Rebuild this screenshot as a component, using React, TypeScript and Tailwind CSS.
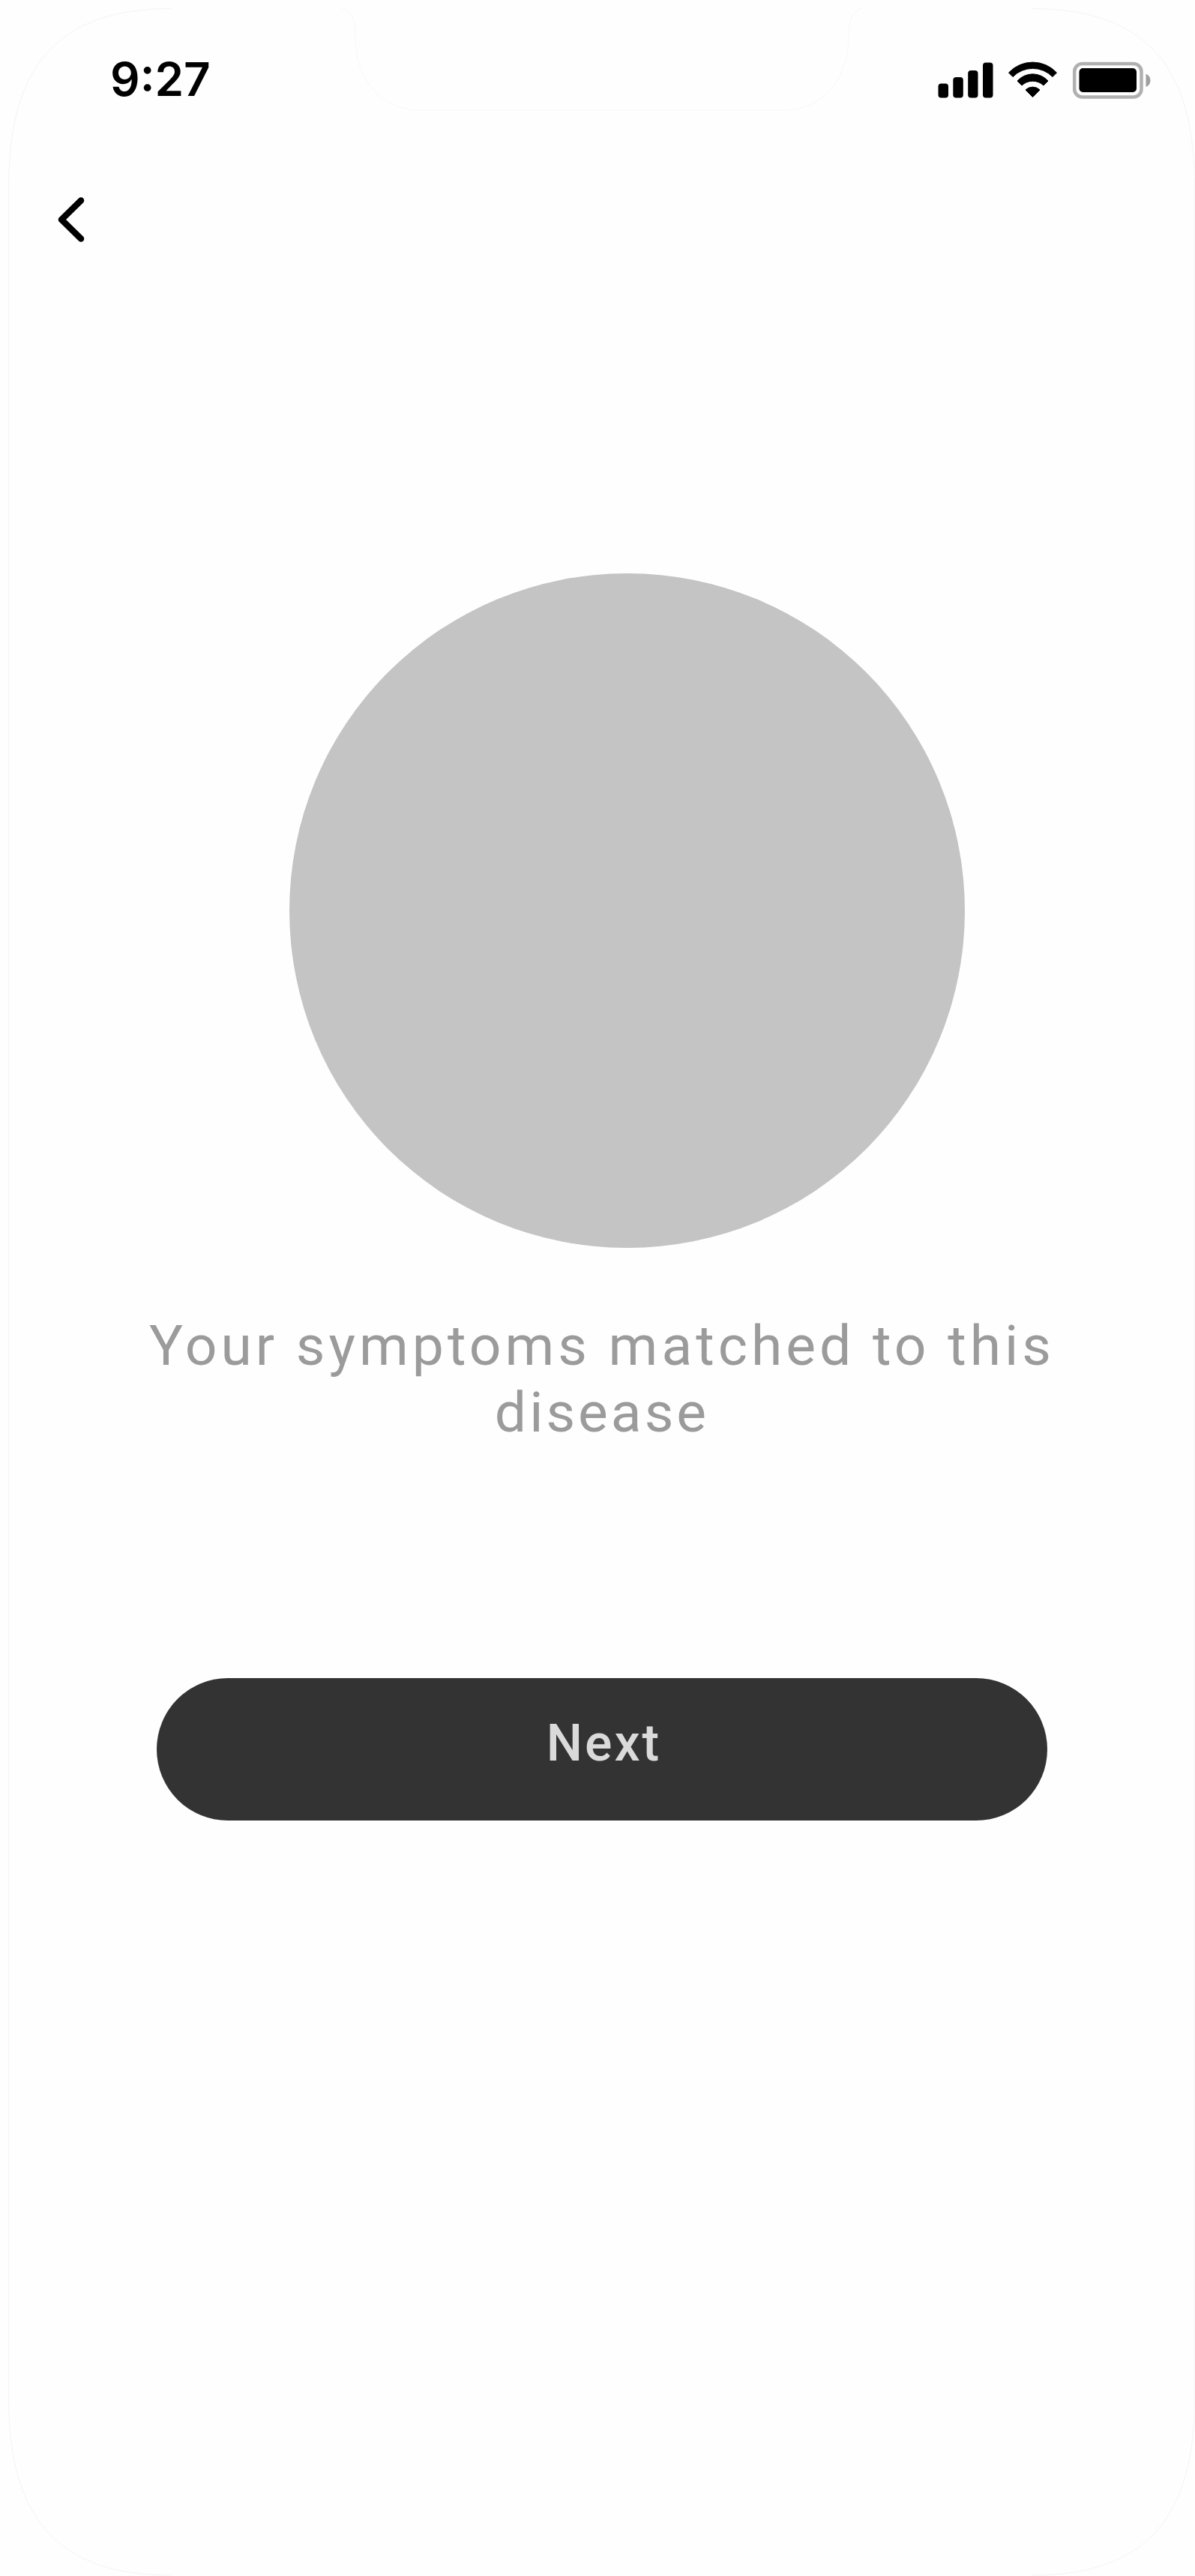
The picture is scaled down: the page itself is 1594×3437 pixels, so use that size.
function StatusIcons() {
  return (
    <svg className="h-[60px] w-[300px]" viewBox="1244 77 300 60" fill="none">
      {/* Signal */}
      <g fill="#000">
        <rect x="1251.5" y="111.5" width="13.5" height="19" rx="4" />
        <rect x="1271.3" y="103" width="13.5" height="27.5" rx="4" />
        <rect x="1291.2" y="94" width="13.3" height="36.5" rx="4" />
        <rect x="1311" y="83.5" width="13.5" height="47" rx="4" />
      </g>
      {/* Wifi */}
      <g fill="#000" stroke="#000" strokeLinejoin="round">
        <path d="M1345.500 97A43.700 43.700 0 0 1 1409.500 97L1404 102.500A37 37 0 0 0 1351 102.500Z" />
        <path d="M1357 108A27.500 27.500 0 0 1 1398 108L1392 114A21 21 0 0 0 1363 114Z" />
        <path d="M1368 120A13.500 13.500 0 0 1 1387 120L1377.500 129.500Z" />
      </g>
      {/* Battery */}
      <rect x="1433.200" y="85" width="89.300" height="44.500" rx="10.500" stroke="#b0b0b0" strokeWidth="4.500" />
      <rect x="1439.500" y="91" width="76.500" height="32" rx="5" fill="#000" />
      <path d="M1528.500 98.500Q1534.500 101 1534.500 107.200T1528.500 116Z" fill="#a0a0a0" />
    </svg>
  );
}

function DeviceOutline() {
  return (
    <svg className="pointer-events-none absolute inset-0 h-full w-full" viewBox="0 0 1594 3437" fill="none">
      <path d="M228 11.500C75 12 11.500 90 11.500 250V3200C11.500 3357 75 3436 228 3436" stroke="#f4f4f4" />
      <path d="M456 11.500C469 15 474 25 474 50C474 105 508 147 560 147H1045C1097 147 1132 105 1132 50C1133 25 1137 15 1149 11.500" stroke="#f8f8f8" />
      <path d="M1377 11.500C1530 12 1593.500 90 1593.500 250V3200C1593.500 3357 1530 3436 1377 3436" stroke="#f4f4f4" />
    </svg>
  );
}

export default function App() {
  return (
    <main className="relative flex h-[3437px] w-[1594px] flex-col overflow-hidden bg-[#fefefe]">
      <DeviceOutline />

      {/* Status Bar */}
      <header className="flex items-start justify-between pt-[77px] pr-[50px] pl-[147px]">
        <span className="font-['Inter',sans-serif] text-[62px] leading-[58px] font-semibold text-black">
          9:27
        </span>
        <StatusIcons />
      </header>

      {/* Back Button */}
      <button aria-label="Back" className="mt-[122px] ml-[72px] h-[68px] w-[46px]">
        <svg className="h-full w-full" viewBox="0 0 46 68" fill="none">
          <path d="M36 8.500L10 34L36 59.500" stroke="#000" strokeWidth="8.500" strokeLinecap="round" strokeLinejoin="round" />
        </svg>
      </button>

      {/* Main Content */}
      <div className="mt-[438px] ml-[386px] h-[900px] w-[901px] rounded-full bg-[#c4c4c4]" />

      <h1 className="mt-[86px] ml-[181px] w-[1244px] text-center font-['Roboto',sans-serif] text-[75px] leading-[89px] tracking-[5px] text-[#9b9b9b]">
        Your symptoms matched to this
        <br />
        <span className="tracking-[4px]">disease</span>
      </h1>

      <button className="mt-[310px] ml-[209px] h-[190px] w-[1188px] rounded-full bg-[#333333] pb-[16px] pl-[5px] font-['Roboto',sans-serif] text-[68px] font-medium tracking-[3px] text-[#dadada]">
        Next
      </button>
    </main>
  );
}
